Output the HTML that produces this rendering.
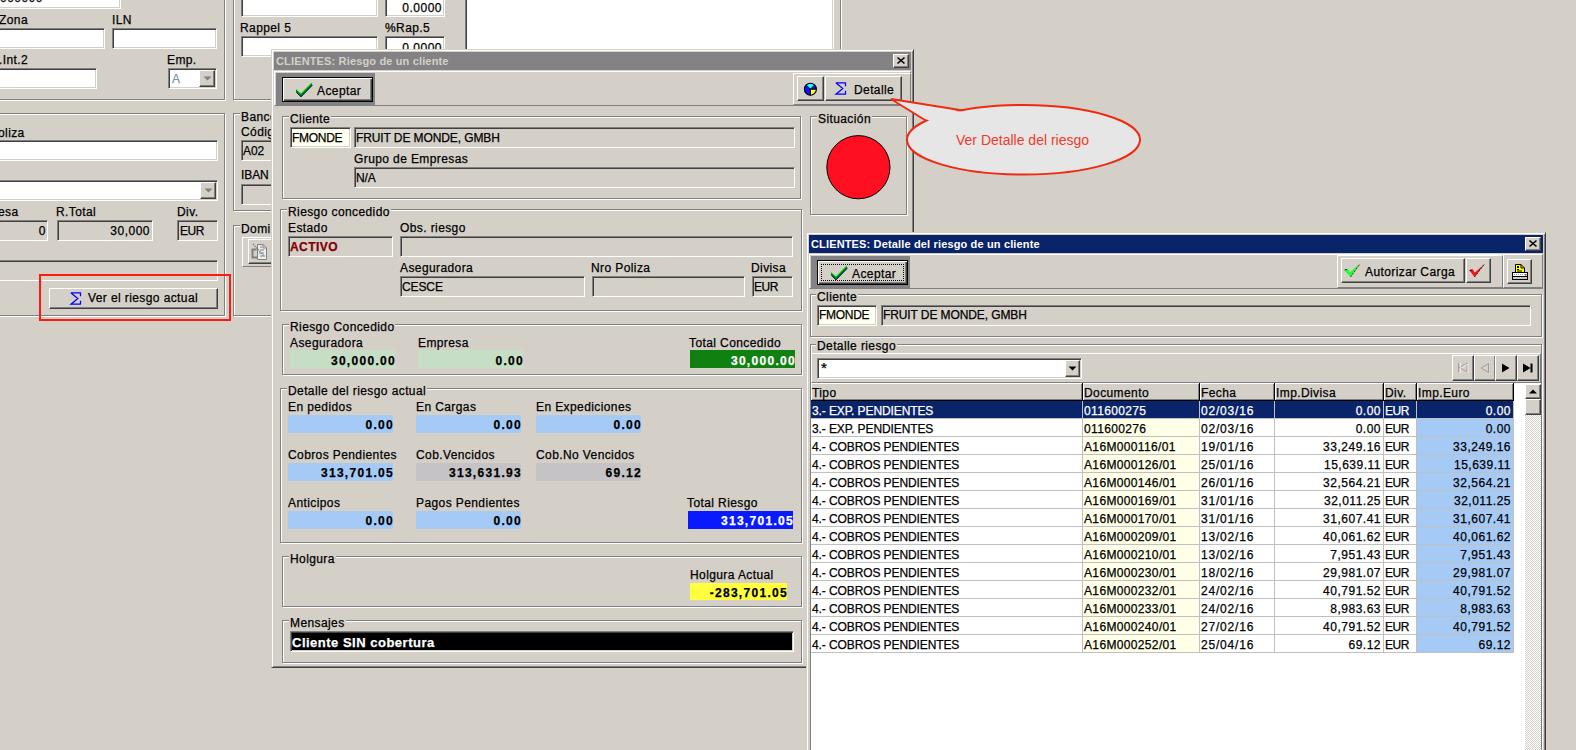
<!DOCTYPE html><html><head><meta charset="utf-8"><style>
*{margin:0;padding:0}
html,body{width:1576px;height:750px;overflow:hidden;background:#d4d0c8;position:relative}
.a,.t,.fld,.grp,.btn,.pnl,.pnls,.win{position:absolute;box-sizing:border-box}
.t{font-family:"Liberation Sans",sans-serif;font-size:12px;line-height:12px;white-space:nowrap;color:#000;letter-spacing:0.4px;-webkit-text-stroke:0.25px}
.b{font-weight:bold;letter-spacing:1.3px}
.up{letter-spacing:-0.1px}
.dt{letter-spacing:0.8px}
.doc{letter-spacing:0.35px}
.eur{letter-spacing:-0.5px}
.num{letter-spacing:0.5px}
.r{text-align:right}
.gl{background:#d4d0c8;padding:0 1px}
.fld{border:1px solid;border-color:#808080 #fff #fff #808080;box-shadow:inset 1px 1px #404040,inset -1px -1px #d4d0c8}
.grp{border:1px solid #808080;box-shadow:inset 1px 1px #fff,1px 1px #fff}
.btn{background:#d4d0c8;border:1px solid;border-color:#fff #404040 #404040 #fff;box-shadow:inset -1px -1px #808080}
.pnl{border:1px solid;border-color:#fff #808080 #808080 #fff}
.win{background:#d4d0c8;border:1px solid;border-color:#d4d0c8 #404040 #404040 #d4d0c8;box-shadow:inset 1px 1px #fff,inset -1px -1px #808080}
.tt{font-family:"Liberation Sans",sans-serif;font-size:11px;line-height:11px;font-weight:bold;letter-spacing:0.15px;white-space:nowrap;position:absolute}
svg{position:absolute;overflow:visible}
</style></head><body>
<div class="grp" style="left:-20px;top:-40px;width:245px;height:140px;"></div>
<div class="fld" style="left:-20px;top:-30px;width:141px;height:39px;background:#fff;"></div>
<div class="t num" style="left:0px;top:-8px;">000090</div>
<div class="t" style="left:-1px;top:14px;">Zona</div>
<div class="fld" style="left:-20px;top:28px;width:125px;height:21px;background:#fff;"></div>
<div class="t" style="left:112px;top:14px;">ILN</div>
<div class="fld" style="left:112px;top:28px;width:105px;height:21px;background:#fff;"></div>
<div class="t" style="left:-1px;top:54px;">.Int.2</div>
<div class="fld" style="left:-20px;top:68px;width:117px;height:21px;background:#fff;"></div>
<div class="t" style="left:167px;top:54px;">Emp.</div>
<div class="fld" style="left:168px;top:68px;width:49px;height:21px;background:#fff;"></div>
<div class="t" style="left:172px;top:73px;color:#8090b0">A</div>
<div class="btn" style="left:199px;top:70px;width:16px;height:17px;"></div>
<svg style="left:203px;top:76px" width="9" height="5"><path d="M0.5 0.5h8l-4 4z" fill="#808080"/></svg>
<div class="grp" style="left:-20px;top:113px;width:245px;height:203px;"></div>
<div class="t" style="left:-2px;top:127px;">oliza</div>
<div class="fld" style="left:-20px;top:140px;width:238px;height:21px;background:#fff;"></div>
<div class="fld" style="left:-20px;top:180px;width:238px;height:21px;background:#fff;"></div>
<div class="btn" style="left:200px;top:182px;width:16px;height:17px;"></div>
<svg style="left:204px;top:188px" width="9" height="5"><path d="M0.5 0.5h8l-4 4z" fill="#808080"/></svg>
<div class="t" style="left:-2px;top:206px;">esa</div>
<div class="fld" style="left:-20px;top:220px;width:68px;height:21px;background:#d4d0c8;"></div>
<div class="t num r" style="right:1530px;top:225px;">0</div>
<div class="t" style="left:56px;top:206px;">R.Total</div>
<div class="fld" style="left:57px;top:220px;width:96px;height:21px;background:#d4d0c8;"></div>
<div class="t num r" style="right:1426px;top:225px;">30,000</div>
<div class="t" style="left:177px;top:206px;">Div.</div>
<div class="fld" style="left:177px;top:220px;width:41px;height:21px;background:#d4d0c8;"></div>
<div class="t eur" style="left:180px;top:225px;">EUR</div>
<div class="fld" style="left:-20px;top:260px;width:238px;height:21px;background:#d4d0c8;"></div>
<div class="btn" style="left:49px;top:288px;width:169px;height:21px;"></div>
<svg style="left:70px;top:292px" width="12" height="14"><path d="M0.8 0.8H10.8M10.5 0.5V4.2M1 1L7.8 6.5L1 12.2H10.8M10.5 12.5V8.8" fill="none" stroke="#0000ff" stroke-width="1.25"/></svg>
<div class="t" style="left:88px;top:292px;">Ver el riesgo actual</div>
<div class="a" style="left:39px;top:274px;width:192px;height:47px;border:2px solid #ff1a10"></div>
<div class="grp" style="left:233px;top:-40px;width:608px;height:140px;"></div>
<div class="fld" style="left:241px;top:-30px;width:137px;height:47px;background:#fff;"></div>
<div class="fld" style="left:385px;top:-30px;width:60px;height:47px;background:#fff;"></div>
<div class="t num r" style="right:1134px;top:2px;">0.0000</div>
<div class="t" style="left:240px;top:22px;">Rappel 5</div>
<div class="t" style="left:385px;top:22px;">%Rap.5</div>
<div class="fld" style="left:241px;top:36px;width:137px;height:21px;background:#fff;"></div>
<div class="fld" style="left:385px;top:36px;width:60px;height:25px;background:#fff;"></div>
<div class="t num r" style="right:1134px;top:42px;">0.0000</div>
<div class="fld" style="left:465px;top:-30px;width:369px;height:91px;background:#fff;"></div>
<div class="grp" style="left:233px;top:113px;width:68px;height:98px;"></div>
<div class="t gl" style="left:240px;top:111px;">Banco</div>
<div class="t" style="left:241px;top:126px;">Códig</div>
<div class="fld" style="left:241px;top:140px;width:60px;height:21px;background:#d4d0c8;"></div>
<div class="t up" style="left:243px;top:145px;">A02</div>
<div class="t up" style="left:241px;top:169px;">IBAN</div>
<div class="fld" style="left:241px;top:184px;width:60px;height:21px;background:#d4d0c8;"></div>
<div class="grp" style="left:233px;top:225px;width:68px;height:91px;"></div>
<div class="t gl" style="left:240px;top:223px;">Domi</div>
<div class="pnl" style="left:242px;top:237px;width:59px;height:30px;"></div>
<div class="btn" style="left:248px;top:239px;width:53px;height:25px;"></div>
<svg style="left:251px;top:243px" width="17" height="18"><path d="M6.5 1.5H12L15.5 5V16.5H6.5Z" fill="#eeeeee" stroke="#808080"/><path d="M12 1.5V5H15.5" fill="none" stroke="#808080"/><path d="M9 4h2M9 7h4M8 10h5M9 13h5" stroke="#808080"/><path d="M5.5 6.5H1.5V14.5H6" fill="none" stroke="#808080" stroke-width="2"/><path d="M2 1l11 12" stroke="#808080" stroke-width="1.3" stroke-dasharray="1.4 1"/></svg>
<div class="win" style="left:271px;top:49px;width:643px;height:619px;"></div>
<div class="a" style="left:274px;top:52px;width:637px;height:18px;background:#858286"></div>
<div class="tt" style="left:276px;top:56px;color:#d4d0c8">CLIENTES: Riesgo de un cliente</div>
<div class="btn" style="left:893px;top:54px;width:16px;height:14px;"></div>
<svg style="left:897px;top:57px" width="8" height="7"><path d="M0.5 0.5L7.5 6.5M7.5 0.5L0.5 6.5" stroke="#000" stroke-width="1.6"/></svg>
<div class="pnl" style="left:274px;top:71px;width:637px;height:35px;"></div>
<div class="a" style="left:276px;top:73px;width:99px;height:32px;background:#858286"></div>
<div class="a" style="left:282px;top:77px;width:91px;height:25px;border:1px solid #000;background:#d4d0c8;box-shadow:inset 1px 1px #fff,inset -1px -1px #404040,inset -2px -2px #808080"></div>
<svg style="left:296px;top:82px" width="18" height="17"><path d="M0 7.2L5 11.6L15.6 0.8L16.4 3.2L5 15L0 10Z" fill="#008a00"/><path d="M0.3 10.2L5 14.8L16.3 3.2" fill="none" stroke="#000080" stroke-width="1"/><path d="M0.3 7.4L5 11.6L15.4 1" fill="none" stroke="#22ff22" stroke-width="0.8"/></svg>
<div class="t" style="left:317px;top:85px;">Aceptar</div>
<div class="pnl" style="left:793px;top:73px;width:118px;height:32px;"></div>
<div class="btn" style="left:797px;top:76px;width:27px;height:25px;"></div>
<svg style="left:804px;top:83px" width="14" height="14"><circle cx="6.4" cy="6.2" r="6.0" fill="#1010ff"/><path d="M6.4 6.2L2.16 1.96A6.0 6.0 0 0 1 10.64 1.96Z" fill="#20ffff"/><path d="M6.4 6.2H12.4A6.0 6.0 0 0 1 6.4 12.2Z" fill="#ffff30"/><path d="M2.16 1.96L6.4 6.2L10.64 1.96M6.4 6.2H12.4M6.4 6.2V12.2" stroke="#000" stroke-width="1" fill="none"/><circle cx="6.4" cy="6.2" r="6.0" fill="none" stroke="#000" stroke-width="1.1"/></svg>
<div class="btn" style="left:825px;top:76px;width:77px;height:25px;"></div>
<svg style="left:835px;top:82px" width="12" height="14"><path d="M0.8 0.8H10.8M10.5 0.5V4.2M1 1L7.8 6.5L1 12.2H10.8M10.5 12.5V8.8" fill="none" stroke="#0000ff" stroke-width="1.25"/></svg>
<div class="t" style="left:854px;top:84px;">Detalle</div>
<div class="grp" style="left:282px;top:116px;width:519px;height:83px;"></div>
<div class="t gl" style="left:289px;top:113px;">Cliente</div>
<div class="fld" style="left:290px;top:127px;width:61px;height:21px;background:#fffff0;"></div>
<div class="t" style="left:292px;top:132px;letter-spacing:-0.3px">FMONDE</div>
<div class="fld" style="left:354px;top:127px;width:441px;height:21px;background:#d4d0c8;"></div>
<div class="t up" style="left:356px;top:132px;">FRUIT DE MONDE, GMBH</div>
<div class="t" style="left:354px;top:153px;">Grupo de Empresas</div>
<div class="fld" style="left:354px;top:167px;width:441px;height:21px;background:#d4d0c8;"></div>
<div class="t up" style="left:356px;top:172px;">N/A</div>
<div class="grp" style="left:810px;top:116px;width:97px;height:99px;"></div>
<div class="t gl" style="left:817px;top:113px;">Situación</div>
<svg style="left:826px;top:135px" width="65" height="65"><circle cx="32.4" cy="32.2" r="31.6" fill="#ff0f1f" stroke="#000" stroke-width="1"/></svg>
<div class="grp" style="left:280px;top:209px;width:522px;height:102px;"></div>
<div class="t gl" style="left:287px;top:206px;">Riesgo concedido</div>
<div class="t" style="left:288px;top:222px;">Estado</div>
<div class="fld" style="left:288px;top:236px;width:105px;height:21px;background:#d4d0c8;"></div>
<div class="t b" style="left:290px;top:241px;color:#800000;letter-spacing:0.45px">ACTIVO</div>
<div class="t" style="left:400px;top:222px;">Obs. riesgo</div>
<div class="fld" style="left:400px;top:236px;width:393px;height:21px;background:#d4d0c8;"></div>
<div class="t" style="left:400px;top:262px;">Aseguradora</div>
<div class="fld" style="left:400px;top:276px;width:185px;height:21px;background:#d4d0c8;"></div>
<div class="t up" style="left:402px;top:281px;">CESCE</div>
<div class="t" style="left:591px;top:262px;">Nro Poliza</div>
<div class="fld" style="left:592px;top:276px;width:153px;height:21px;background:#d4d0c8;"></div>
<div class="t" style="left:751px;top:262px;">Divisa</div>
<div class="fld" style="left:752px;top:276px;width:41px;height:21px;background:#d4d0c8;"></div>
<div class="t eur" style="left:754px;top:281px;">EUR</div>
<div class="grp" style="left:282px;top:324px;width:520px;height:51px;"></div>
<div class="t gl" style="left:289px;top:321px;">Riesgo Concedido</div>
<div class="t" style="left:290px;top:337px;">Aseguradora</div>
<div class="a" style="left:290px;top:350px;width:105px;height:18px;background:#c6dec6"></div>
<div class="t b r" style="right:1180px;top:355px;">30,000.00</div>
<div class="t" style="left:418px;top:337px;">Empresa</div>
<div class="a" style="left:418px;top:350px;width:105px;height:18px;background:#c6dec6"></div>
<div class="t b r" style="right:1052px;top:355px;">0.00</div>
<div class="t" style="left:689px;top:337px;">Total Concedido</div>
<div class="a" style="left:690px;top:350px;width:105px;height:18px;background:#108010"></div>
<div class="t b r" style="right:780px;top:355px;color:#fff">30,000.00</div>
<div class="grp" style="left:280px;top:388px;width:522px;height:155px;"></div>
<div class="t gl" style="left:287px;top:385px;">Detalle del riesgo actual</div>
<div class="t" style="left:288px;top:401px;">En pedidos</div>
<div class="a" style="left:288px;top:415px;width:105px;height:18px;background:#a6caf6"></div>
<div class="t b r" style="right:1182px;top:419px;">0.00</div>
<div class="t" style="left:416px;top:401px;">En Cargas</div>
<div class="a" style="left:416px;top:415px;width:105px;height:18px;background:#a6caf6"></div>
<div class="t b r" style="right:1054px;top:419px;">0.00</div>
<div class="t" style="left:536px;top:401px;">En Expediciones</div>
<div class="a" style="left:536px;top:415px;width:105px;height:18px;background:#a6caf6"></div>
<div class="t b r" style="right:934px;top:419px;">0.00</div>
<div class="t" style="left:288px;top:449px;">Cobros Pendientes</div>
<div class="a" style="left:288px;top:463px;width:105px;height:18px;background:#a6caf6"></div>
<div class="t b r" style="right:1182px;top:467px;">313,701.05</div>
<div class="t" style="left:416px;top:449px;">Cob.Vencidos</div>
<div class="a" style="left:416px;top:463px;width:105px;height:18px;background:#c5c3c6"></div>
<div class="t b r" style="right:1054px;top:467px;">313,631.93</div>
<div class="t" style="left:536px;top:449px;">Cob.No Vencidos</div>
<div class="a" style="left:536px;top:463px;width:105px;height:18px;background:#c5c3c6"></div>
<div class="t b r" style="right:934px;top:467px;">69.12</div>
<div class="t" style="left:288px;top:497px;">Anticipos</div>
<div class="a" style="left:288px;top:511px;width:105px;height:18px;background:#a6caf6"></div>
<div class="t b r" style="right:1182px;top:515px;">0.00</div>
<div class="t" style="left:416px;top:497px;">Pagos Pendientes</div>
<div class="a" style="left:416px;top:511px;width:105px;height:18px;background:#a6caf6"></div>
<div class="t b r" style="right:1054px;top:515px;">0.00</div>
<div class="t" style="left:687px;top:497px;">Total Riesgo</div>
<div class="a" style="left:688px;top:511px;width:105px;height:18px;background:#0a1aff"></div>
<div class="t b r" style="right:782px;top:515px;color:#fff">313,701.05</div>
<div class="grp" style="left:282px;top:556px;width:520px;height:51px;"></div>
<div class="t gl" style="left:289px;top:553px;">Holgura</div>
<div class="t" style="left:690px;top:569px;">Holgura Actual</div>
<div class="a" style="left:690px;top:583px;width:97px;height:17px;background:#ffff40"></div>
<div class="t b r" style="right:788px;top:587px;">-283,701.05</div>
<div class="grp" style="left:282px;top:620px;width:520px;height:43px;"></div>
<div class="t gl" style="left:289px;top:617px;">Mensajes</div>
<div class="fld" style="left:290px;top:631px;width:504px;height:21px;background:#000;"></div>
<div class="t b" style="left:292px;top:636px;color:#fff;letter-spacing:0.5px;font-size:13px;line-height:13px">Cliente SIN cobertura</div>
<svg style="left:0;top:0" width="1576" height="750"><path d="M963 110.5 L891 99 L926.5 121" fill="#e6e6e6" stroke="#f02a10" stroke-width="2" stroke-linejoin="miter"/><ellipse cx="1023.5" cy="139.8" rx="116.5" ry="34.8" fill="#e6e6e6" stroke="#f02a10" stroke-width="2"/><path d="M966 112.5 L897 101.5 L932 122.5 L950 116Z" fill="#e6e6e6"/></svg>
<div class="a" style="left:956px;top:133px;font-family:'Liberation Sans',sans-serif;font-size:14px;line-height:14px;color:#ef3a2a;white-space:nowrap">Ver Detalle del riesgo</div>
<div class="win" style="left:806px;top:232px;width:740px;height:569px;"></div>
<div class="a" style="left:809px;top:235px;width:734px;height:18px;background:#0a246a"></div>
<div class="tt" style="left:811px;top:239px;color:#fff">CLIENTES: Detalle del riesgo de un cliente</div>
<div class="btn" style="left:1525px;top:237px;width:16px;height:14px;"></div>
<svg style="left:1529px;top:240px" width="8" height="7"><path d="M0.5 0.5L7.5 6.5M7.5 0.5L0.5 6.5" stroke="#000" stroke-width="1.6"/></svg>
<div class="pnl" style="left:809px;top:254px;width:734px;height:35px;"></div>
<div class="a" style="left:811px;top:256px;width:99px;height:32px;background:#858286"></div>
<div class="a" style="left:817px;top:260px;width:91px;height:25px;border:1px solid #000;background:#d4d0c8;box-shadow:inset 1px 1px #fff,inset -1px -1px #404040,inset -2px -2px #808080"></div>
<div class="a" style="left:821px;top:264px;width:83px;height:17px;border:1px dotted #000"></div>
<svg style="left:831px;top:265px" width="18" height="17"><path d="M0 7.2L5 11.6L15.6 0.8L16.4 3.2L5 15L0 10Z" fill="#008a00"/><path d="M0.3 10.2L5 14.8L16.3 3.2" fill="none" stroke="#000080" stroke-width="1"/><path d="M0.3 7.4L5 11.6L15.4 1" fill="none" stroke="#22ff22" stroke-width="0.8"/></svg>
<div class="t" style="left:852px;top:268px;">Aceptar</div>
<div class="pnl" style="left:1337px;top:255px;width:166px;height:33px;"></div>
<div class="btn" style="left:1341px;top:258px;width:124px;height:25px;"></div>
<svg style="left:1344px;top:262px" width="17" height="16"><path d="M0.5 8.5L3.5 6.5L6.2 10L16 1.5L6.5 15Z" fill="#20ff30"/><path d="M6.5 15L16 2" stroke="#000" stroke-width="1" stroke-dasharray="1 1"/><path d="M0.5 8L3 7.5" stroke="#000" stroke-width="0.8"/></svg>
<div class="t" style="left:1365px;top:266px;">Autorizar Carga</div>
<div class="btn" style="left:1466px;top:258px;width:25px;height:25px;"></div>
<svg style="left:1469px;top:263px" width="17" height="16"><path d="M0.5 7.5L3.5 6L5.8 9.5L15.5 1L5.5 14Z" fill="#ff1010"/><path d="M5.5 14L15.5 1" stroke="#000" stroke-width="1" stroke-dasharray="1 1"/><path d="M0.5 7.5L3 7" stroke="#000" stroke-width="0.8"/></svg>
<div class="pnl" style="left:1503px;top:254px;width:40px;height:34px;"></div>
<div class="btn" style="left:1507px;top:259px;width:25px;height:25px;"></div>
<svg style="left:1512px;top:263px" width="17" height="18"><path d="M3.5 1.5H9L12.5 5V9.5H3.5Z" fill="#ffff00" stroke="#000"/><path d="M9 1.5V5H12.5" fill="none" stroke="#000"/><rect x="5" y="3" width="2" height="2" fill="#000"/><rect x="5" y="6" width="2" height="1" fill="#000"/><rect x="5" y="7.5" width="5" height="1" fill="#000"/><rect x="0.5" y="9.5" width="15" height="7" fill="#fff" stroke="#000"/><path d="M2 11.5h11" stroke="#a0a0a0" stroke-dasharray="1 1"/><rect x="13" y="11" width="1.5" height="1.5" fill="#ff0000"/><path d="M1 13.5h14" stroke="#000"/><rect x="1" y="14" width="14" height="2" fill="#c8c8c8"/></svg>
<div class="grp" style="left:810px;top:294px;width:732px;height:43px;"></div>
<div class="t gl" style="left:816px;top:291px;">Cliente</div>
<div class="fld" style="left:817px;top:305px;width:60px;height:21px;background:#fffff0;"></div>
<div class="t" style="left:819px;top:309px;letter-spacing:-0.3px">FMONDE</div>
<div class="fld" style="left:881px;top:305px;width:650px;height:21px;background:#d4d0c8;"></div>
<div class="t up" style="left:883px;top:309px;">FRUIT DE MONDE, GMBH</div>
<div class="grp" style="left:810px;top:344px;width:732px;height:557px;"></div>
<div class="t gl" style="left:816px;top:340px;">Detalle riesgo</div>
<div class="pnl" style="left:811px;top:353px;width:730px;height:30px;"></div>
<div class="fld" style="left:817px;top:358px;width:265px;height:21px;background:#fff;"></div>
<div class="t" style="left:821px;top:362px;font-size:15px">*</div>
<div class="btn" style="left:1065px;top:360px;width:15px;height:17px;"></div>
<svg style="left:1068px;top:366px" width="9" height="5"><path d="M0.5 0.5h8l-4 4z" fill="#000"/></svg>
<div class="btn" style="left:1452px;top:355px;width:22px;height:26px;"></div>
<div class="btn" style="left:1474px;top:355px;width:22px;height:26px;"></div>
<div class="btn" style="left:1495px;top:355px;width:22px;height:26px;"></div>
<div class="btn" style="left:1517px;top:355px;width:22px;height:26px;"></div>
<svg style="left:0;top:0" width="1576" height="750"><path d="M1458.5 363v9M1459.5 367.5l7.5-4.5v9z" fill="none" stroke="#a0a0a0"/><path d="M1460.5 363v10M1461 368l7-4v9" fill="none" stroke="#fff" stroke-width="0.6"/><path d="M1488.5 363.5v9l-7.5-4.5z" fill="none" stroke="#a0a0a0"/><path d="M1502 363.5v9l7.5-4.5z" fill="#000"/><path d="M1523 363.5v9l7.5-4.5z" fill="#000"/><rect x="1530.5" y="363.5" width="2" height="9" fill="#000"/></svg>
<div class="a" style="left:811px;top:383px;width:730px;height:418px;background:#fff"></div>
<div class="a" style="left:811px;top:383px;width:272px;height:18px;background:#d4d0c8;border-right:1px solid #000;border-bottom:1px solid #000;box-shadow:inset 1px 1px #fff,inset -1px -1px #808080"></div>
<div class="t" style="left:812px;top:387px;">Tipo</div>
<div class="a" style="left:1083px;top:383px;width:117px;height:18px;background:#d4d0c8;border-right:1px solid #000;border-bottom:1px solid #000;box-shadow:inset 1px 1px #fff,inset -1px -1px #808080"></div>
<div class="t" style="left:1084px;top:387px;">Documento</div>
<div class="a" style="left:1200px;top:383px;width:75px;height:18px;background:#d4d0c8;border-right:1px solid #000;border-bottom:1px solid #000;box-shadow:inset 1px 1px #fff,inset -1px -1px #808080"></div>
<div class="t" style="left:1201px;top:387px;">Fecha</div>
<div class="a" style="left:1275px;top:383px;width:109px;height:18px;background:#d4d0c8;border-right:1px solid #000;border-bottom:1px solid #000;box-shadow:inset 1px 1px #fff,inset -1px -1px #808080"></div>
<div class="t" style="left:1276px;top:387px;">Imp.Divisa</div>
<div class="a" style="left:1384px;top:383px;width:33px;height:18px;background:#d4d0c8;border-right:1px solid #000;border-bottom:1px solid #000;box-shadow:inset 1px 1px #fff,inset -1px -1px #808080"></div>
<div class="t" style="left:1385px;top:387px;">Div.</div>
<div class="a" style="left:1417px;top:383px;width:97px;height:18px;background:#d4d0c8;border-right:1px solid #000;border-bottom:1px solid #000;box-shadow:inset 1px 1px #fff,inset -1px -1px #808080"></div>
<div class="t" style="left:1418px;top:387px;">Imp.Euro</div>
<div class="a" style="left:811px;top:401px;width:272px;height:18px;background:#0a246a;border-right:1px solid #c0c0c0;border-bottom:1px solid #c0c0c0"></div>
<div class="t up" style="left:812px;top:405px;color:#fff">3.- EXP. PENDIENTES</div>
<div class="a" style="left:1083px;top:401px;width:117px;height:18px;background:#0a246a;border-right:1px solid #c0c0c0;border-bottom:1px solid #c0c0c0"></div>
<div class="t doc" style="left:1084px;top:405px;color:#fff">011600275</div>
<div class="a" style="left:1200px;top:401px;width:75px;height:18px;background:#0a246a;border-right:1px solid #c0c0c0;border-bottom:1px solid #c0c0c0"></div>
<div class="t dt" style="left:1201px;top:405px;color:#fff">02/03/16</div>
<div class="a" style="left:1275px;top:401px;width:109px;height:18px;background:#0a246a;border-right:1px solid #c0c0c0;border-bottom:1px solid #c0c0c0"></div>
<div class="t num r" style="right:195px;top:405px;color:#fff">0.00</div>
<div class="a" style="left:1384px;top:401px;width:33px;height:18px;background:#0a246a;border-right:1px solid #c0c0c0;border-bottom:1px solid #c0c0c0"></div>
<div class="t eur" style="left:1385px;top:405px;color:#fff">EUR</div>
<div class="a" style="left:1417px;top:401px;width:97px;height:18px;background:#0a246a;border-right:1px solid #c0c0c0;border-bottom:1px solid #c0c0c0"></div>
<div class="t num r" style="right:65px;top:405px;color:#fff">0.00</div>
<div class="a" style="left:811px;top:419px;width:272px;height:18px;background:#fff;border-right:1px solid #c0c0c0;border-bottom:1px solid #c0c0c0"></div>
<div class="t up" style="left:812px;top:423px;color:#000">3.- EXP. PENDIENTES</div>
<div class="a" style="left:1083px;top:419px;width:117px;height:18px;background:#ffffe8;border-right:1px solid #c0c0c0;border-bottom:1px solid #c0c0c0"></div>
<div class="t doc" style="left:1084px;top:423px;color:#000">011600276</div>
<div class="a" style="left:1200px;top:419px;width:75px;height:18px;background:#fff;border-right:1px solid #c0c0c0;border-bottom:1px solid #c0c0c0"></div>
<div class="t dt" style="left:1201px;top:423px;color:#000">02/03/16</div>
<div class="a" style="left:1275px;top:419px;width:109px;height:18px;background:#fff;border-right:1px solid #c0c0c0;border-bottom:1px solid #c0c0c0"></div>
<div class="t num r" style="right:195px;top:423px;color:#000">0.00</div>
<div class="a" style="left:1384px;top:419px;width:33px;height:18px;background:#fff;border-right:1px solid #c0c0c0;border-bottom:1px solid #c0c0c0"></div>
<div class="t eur" style="left:1385px;top:423px;color:#000">EUR</div>
<div class="a" style="left:1417px;top:419px;width:97px;height:18px;background:#a6caf6;border-right:1px solid #c0c0c0;border-bottom:1px solid #c0c0c0"></div>
<div class="t num r" style="right:65px;top:423px;color:#000">0.00</div>
<div class="a" style="left:811px;top:437px;width:272px;height:18px;background:#fff;border-right:1px solid #c0c0c0;border-bottom:1px solid #c0c0c0"></div>
<div class="t up" style="left:812px;top:441px;color:#000">4.- COBROS PENDIENTES</div>
<div class="a" style="left:1083px;top:437px;width:117px;height:18px;background:#ffffe8;border-right:1px solid #c0c0c0;border-bottom:1px solid #c0c0c0"></div>
<div class="t doc" style="left:1084px;top:441px;color:#000">A16M000116/01</div>
<div class="a" style="left:1200px;top:437px;width:75px;height:18px;background:#fff;border-right:1px solid #c0c0c0;border-bottom:1px solid #c0c0c0"></div>
<div class="t dt" style="left:1201px;top:441px;color:#000">19/01/16</div>
<div class="a" style="left:1275px;top:437px;width:109px;height:18px;background:#fff;border-right:1px solid #c0c0c0;border-bottom:1px solid #c0c0c0"></div>
<div class="t num r" style="right:195px;top:441px;color:#000">33,249.16</div>
<div class="a" style="left:1384px;top:437px;width:33px;height:18px;background:#fff;border-right:1px solid #c0c0c0;border-bottom:1px solid #c0c0c0"></div>
<div class="t eur" style="left:1385px;top:441px;color:#000">EUR</div>
<div class="a" style="left:1417px;top:437px;width:97px;height:18px;background:#a6caf6;border-right:1px solid #c0c0c0;border-bottom:1px solid #c0c0c0"></div>
<div class="t num r" style="right:65px;top:441px;color:#000">33,249.16</div>
<div class="a" style="left:811px;top:455px;width:272px;height:18px;background:#fff;border-right:1px solid #c0c0c0;border-bottom:1px solid #c0c0c0"></div>
<div class="t up" style="left:812px;top:459px;color:#000">4.- COBROS PENDIENTES</div>
<div class="a" style="left:1083px;top:455px;width:117px;height:18px;background:#ffffe8;border-right:1px solid #c0c0c0;border-bottom:1px solid #c0c0c0"></div>
<div class="t doc" style="left:1084px;top:459px;color:#000">A16M000126/01</div>
<div class="a" style="left:1200px;top:455px;width:75px;height:18px;background:#fff;border-right:1px solid #c0c0c0;border-bottom:1px solid #c0c0c0"></div>
<div class="t dt" style="left:1201px;top:459px;color:#000">25/01/16</div>
<div class="a" style="left:1275px;top:455px;width:109px;height:18px;background:#fff;border-right:1px solid #c0c0c0;border-bottom:1px solid #c0c0c0"></div>
<div class="t num r" style="right:195px;top:459px;color:#000">15,639.11</div>
<div class="a" style="left:1384px;top:455px;width:33px;height:18px;background:#fff;border-right:1px solid #c0c0c0;border-bottom:1px solid #c0c0c0"></div>
<div class="t eur" style="left:1385px;top:459px;color:#000">EUR</div>
<div class="a" style="left:1417px;top:455px;width:97px;height:18px;background:#a6caf6;border-right:1px solid #c0c0c0;border-bottom:1px solid #c0c0c0"></div>
<div class="t num r" style="right:65px;top:459px;color:#000">15,639.11</div>
<div class="a" style="left:811px;top:473px;width:272px;height:18px;background:#fff;border-right:1px solid #c0c0c0;border-bottom:1px solid #c0c0c0"></div>
<div class="t up" style="left:812px;top:477px;color:#000">4.- COBROS PENDIENTES</div>
<div class="a" style="left:1083px;top:473px;width:117px;height:18px;background:#ffffe8;border-right:1px solid #c0c0c0;border-bottom:1px solid #c0c0c0"></div>
<div class="t doc" style="left:1084px;top:477px;color:#000">A16M000146/01</div>
<div class="a" style="left:1200px;top:473px;width:75px;height:18px;background:#fff;border-right:1px solid #c0c0c0;border-bottom:1px solid #c0c0c0"></div>
<div class="t dt" style="left:1201px;top:477px;color:#000">26/01/16</div>
<div class="a" style="left:1275px;top:473px;width:109px;height:18px;background:#fff;border-right:1px solid #c0c0c0;border-bottom:1px solid #c0c0c0"></div>
<div class="t num r" style="right:195px;top:477px;color:#000">32,564.21</div>
<div class="a" style="left:1384px;top:473px;width:33px;height:18px;background:#fff;border-right:1px solid #c0c0c0;border-bottom:1px solid #c0c0c0"></div>
<div class="t eur" style="left:1385px;top:477px;color:#000">EUR</div>
<div class="a" style="left:1417px;top:473px;width:97px;height:18px;background:#a6caf6;border-right:1px solid #c0c0c0;border-bottom:1px solid #c0c0c0"></div>
<div class="t num r" style="right:65px;top:477px;color:#000">32,564.21</div>
<div class="a" style="left:811px;top:491px;width:272px;height:18px;background:#fff;border-right:1px solid #c0c0c0;border-bottom:1px solid #c0c0c0"></div>
<div class="t up" style="left:812px;top:495px;color:#000">4.- COBROS PENDIENTES</div>
<div class="a" style="left:1083px;top:491px;width:117px;height:18px;background:#ffffe8;border-right:1px solid #c0c0c0;border-bottom:1px solid #c0c0c0"></div>
<div class="t doc" style="left:1084px;top:495px;color:#000">A16M000169/01</div>
<div class="a" style="left:1200px;top:491px;width:75px;height:18px;background:#fff;border-right:1px solid #c0c0c0;border-bottom:1px solid #c0c0c0"></div>
<div class="t dt" style="left:1201px;top:495px;color:#000">31/01/16</div>
<div class="a" style="left:1275px;top:491px;width:109px;height:18px;background:#fff;border-right:1px solid #c0c0c0;border-bottom:1px solid #c0c0c0"></div>
<div class="t num r" style="right:195px;top:495px;color:#000">32,011.25</div>
<div class="a" style="left:1384px;top:491px;width:33px;height:18px;background:#fff;border-right:1px solid #c0c0c0;border-bottom:1px solid #c0c0c0"></div>
<div class="t eur" style="left:1385px;top:495px;color:#000">EUR</div>
<div class="a" style="left:1417px;top:491px;width:97px;height:18px;background:#a6caf6;border-right:1px solid #c0c0c0;border-bottom:1px solid #c0c0c0"></div>
<div class="t num r" style="right:65px;top:495px;color:#000">32,011.25</div>
<div class="a" style="left:811px;top:509px;width:272px;height:18px;background:#fff;border-right:1px solid #c0c0c0;border-bottom:1px solid #c0c0c0"></div>
<div class="t up" style="left:812px;top:513px;color:#000">4.- COBROS PENDIENTES</div>
<div class="a" style="left:1083px;top:509px;width:117px;height:18px;background:#ffffe8;border-right:1px solid #c0c0c0;border-bottom:1px solid #c0c0c0"></div>
<div class="t doc" style="left:1084px;top:513px;color:#000">A16M000170/01</div>
<div class="a" style="left:1200px;top:509px;width:75px;height:18px;background:#fff;border-right:1px solid #c0c0c0;border-bottom:1px solid #c0c0c0"></div>
<div class="t dt" style="left:1201px;top:513px;color:#000">31/01/16</div>
<div class="a" style="left:1275px;top:509px;width:109px;height:18px;background:#fff;border-right:1px solid #c0c0c0;border-bottom:1px solid #c0c0c0"></div>
<div class="t num r" style="right:195px;top:513px;color:#000">31,607.41</div>
<div class="a" style="left:1384px;top:509px;width:33px;height:18px;background:#fff;border-right:1px solid #c0c0c0;border-bottom:1px solid #c0c0c0"></div>
<div class="t eur" style="left:1385px;top:513px;color:#000">EUR</div>
<div class="a" style="left:1417px;top:509px;width:97px;height:18px;background:#a6caf6;border-right:1px solid #c0c0c0;border-bottom:1px solid #c0c0c0"></div>
<div class="t num r" style="right:65px;top:513px;color:#000">31,607.41</div>
<div class="a" style="left:811px;top:527px;width:272px;height:18px;background:#fff;border-right:1px solid #c0c0c0;border-bottom:1px solid #c0c0c0"></div>
<div class="t up" style="left:812px;top:531px;color:#000">4.- COBROS PENDIENTES</div>
<div class="a" style="left:1083px;top:527px;width:117px;height:18px;background:#ffffe8;border-right:1px solid #c0c0c0;border-bottom:1px solid #c0c0c0"></div>
<div class="t doc" style="left:1084px;top:531px;color:#000">A16M000209/01</div>
<div class="a" style="left:1200px;top:527px;width:75px;height:18px;background:#fff;border-right:1px solid #c0c0c0;border-bottom:1px solid #c0c0c0"></div>
<div class="t dt" style="left:1201px;top:531px;color:#000">13/02/16</div>
<div class="a" style="left:1275px;top:527px;width:109px;height:18px;background:#fff;border-right:1px solid #c0c0c0;border-bottom:1px solid #c0c0c0"></div>
<div class="t num r" style="right:195px;top:531px;color:#000">40,061.62</div>
<div class="a" style="left:1384px;top:527px;width:33px;height:18px;background:#fff;border-right:1px solid #c0c0c0;border-bottom:1px solid #c0c0c0"></div>
<div class="t eur" style="left:1385px;top:531px;color:#000">EUR</div>
<div class="a" style="left:1417px;top:527px;width:97px;height:18px;background:#a6caf6;border-right:1px solid #c0c0c0;border-bottom:1px solid #c0c0c0"></div>
<div class="t num r" style="right:65px;top:531px;color:#000">40,061.62</div>
<div class="a" style="left:811px;top:545px;width:272px;height:18px;background:#fff;border-right:1px solid #c0c0c0;border-bottom:1px solid #c0c0c0"></div>
<div class="t up" style="left:812px;top:549px;color:#000">4.- COBROS PENDIENTES</div>
<div class="a" style="left:1083px;top:545px;width:117px;height:18px;background:#ffffe8;border-right:1px solid #c0c0c0;border-bottom:1px solid #c0c0c0"></div>
<div class="t doc" style="left:1084px;top:549px;color:#000">A16M000210/01</div>
<div class="a" style="left:1200px;top:545px;width:75px;height:18px;background:#fff;border-right:1px solid #c0c0c0;border-bottom:1px solid #c0c0c0"></div>
<div class="t dt" style="left:1201px;top:549px;color:#000">13/02/16</div>
<div class="a" style="left:1275px;top:545px;width:109px;height:18px;background:#fff;border-right:1px solid #c0c0c0;border-bottom:1px solid #c0c0c0"></div>
<div class="t num r" style="right:195px;top:549px;color:#000">7,951.43</div>
<div class="a" style="left:1384px;top:545px;width:33px;height:18px;background:#fff;border-right:1px solid #c0c0c0;border-bottom:1px solid #c0c0c0"></div>
<div class="t eur" style="left:1385px;top:549px;color:#000">EUR</div>
<div class="a" style="left:1417px;top:545px;width:97px;height:18px;background:#a6caf6;border-right:1px solid #c0c0c0;border-bottom:1px solid #c0c0c0"></div>
<div class="t num r" style="right:65px;top:549px;color:#000">7,951.43</div>
<div class="a" style="left:811px;top:563px;width:272px;height:18px;background:#fff;border-right:1px solid #c0c0c0;border-bottom:1px solid #c0c0c0"></div>
<div class="t up" style="left:812px;top:567px;color:#000">4.- COBROS PENDIENTES</div>
<div class="a" style="left:1083px;top:563px;width:117px;height:18px;background:#ffffe8;border-right:1px solid #c0c0c0;border-bottom:1px solid #c0c0c0"></div>
<div class="t doc" style="left:1084px;top:567px;color:#000">A16M000230/01</div>
<div class="a" style="left:1200px;top:563px;width:75px;height:18px;background:#fff;border-right:1px solid #c0c0c0;border-bottom:1px solid #c0c0c0"></div>
<div class="t dt" style="left:1201px;top:567px;color:#000">18/02/16</div>
<div class="a" style="left:1275px;top:563px;width:109px;height:18px;background:#fff;border-right:1px solid #c0c0c0;border-bottom:1px solid #c0c0c0"></div>
<div class="t num r" style="right:195px;top:567px;color:#000">29,981.07</div>
<div class="a" style="left:1384px;top:563px;width:33px;height:18px;background:#fff;border-right:1px solid #c0c0c0;border-bottom:1px solid #c0c0c0"></div>
<div class="t eur" style="left:1385px;top:567px;color:#000">EUR</div>
<div class="a" style="left:1417px;top:563px;width:97px;height:18px;background:#a6caf6;border-right:1px solid #c0c0c0;border-bottom:1px solid #c0c0c0"></div>
<div class="t num r" style="right:65px;top:567px;color:#000">29,981.07</div>
<div class="a" style="left:811px;top:581px;width:272px;height:18px;background:#fff;border-right:1px solid #c0c0c0;border-bottom:1px solid #c0c0c0"></div>
<div class="t up" style="left:812px;top:585px;color:#000">4.- COBROS PENDIENTES</div>
<div class="a" style="left:1083px;top:581px;width:117px;height:18px;background:#ffffe8;border-right:1px solid #c0c0c0;border-bottom:1px solid #c0c0c0"></div>
<div class="t doc" style="left:1084px;top:585px;color:#000">A16M000232/01</div>
<div class="a" style="left:1200px;top:581px;width:75px;height:18px;background:#fff;border-right:1px solid #c0c0c0;border-bottom:1px solid #c0c0c0"></div>
<div class="t dt" style="left:1201px;top:585px;color:#000">24/02/16</div>
<div class="a" style="left:1275px;top:581px;width:109px;height:18px;background:#fff;border-right:1px solid #c0c0c0;border-bottom:1px solid #c0c0c0"></div>
<div class="t num r" style="right:195px;top:585px;color:#000">40,791.52</div>
<div class="a" style="left:1384px;top:581px;width:33px;height:18px;background:#fff;border-right:1px solid #c0c0c0;border-bottom:1px solid #c0c0c0"></div>
<div class="t eur" style="left:1385px;top:585px;color:#000">EUR</div>
<div class="a" style="left:1417px;top:581px;width:97px;height:18px;background:#a6caf6;border-right:1px solid #c0c0c0;border-bottom:1px solid #c0c0c0"></div>
<div class="t num r" style="right:65px;top:585px;color:#000">40,791.52</div>
<div class="a" style="left:811px;top:599px;width:272px;height:18px;background:#fff;border-right:1px solid #c0c0c0;border-bottom:1px solid #c0c0c0"></div>
<div class="t up" style="left:812px;top:603px;color:#000">4.- COBROS PENDIENTES</div>
<div class="a" style="left:1083px;top:599px;width:117px;height:18px;background:#ffffe8;border-right:1px solid #c0c0c0;border-bottom:1px solid #c0c0c0"></div>
<div class="t doc" style="left:1084px;top:603px;color:#000">A16M000233/01</div>
<div class="a" style="left:1200px;top:599px;width:75px;height:18px;background:#fff;border-right:1px solid #c0c0c0;border-bottom:1px solid #c0c0c0"></div>
<div class="t dt" style="left:1201px;top:603px;color:#000">24/02/16</div>
<div class="a" style="left:1275px;top:599px;width:109px;height:18px;background:#fff;border-right:1px solid #c0c0c0;border-bottom:1px solid #c0c0c0"></div>
<div class="t num r" style="right:195px;top:603px;color:#000">8,983.63</div>
<div class="a" style="left:1384px;top:599px;width:33px;height:18px;background:#fff;border-right:1px solid #c0c0c0;border-bottom:1px solid #c0c0c0"></div>
<div class="t eur" style="left:1385px;top:603px;color:#000">EUR</div>
<div class="a" style="left:1417px;top:599px;width:97px;height:18px;background:#a6caf6;border-right:1px solid #c0c0c0;border-bottom:1px solid #c0c0c0"></div>
<div class="t num r" style="right:65px;top:603px;color:#000">8,983.63</div>
<div class="a" style="left:811px;top:617px;width:272px;height:18px;background:#fff;border-right:1px solid #c0c0c0;border-bottom:1px solid #c0c0c0"></div>
<div class="t up" style="left:812px;top:621px;color:#000">4.- COBROS PENDIENTES</div>
<div class="a" style="left:1083px;top:617px;width:117px;height:18px;background:#ffffe8;border-right:1px solid #c0c0c0;border-bottom:1px solid #c0c0c0"></div>
<div class="t doc" style="left:1084px;top:621px;color:#000">A16M000240/01</div>
<div class="a" style="left:1200px;top:617px;width:75px;height:18px;background:#fff;border-right:1px solid #c0c0c0;border-bottom:1px solid #c0c0c0"></div>
<div class="t dt" style="left:1201px;top:621px;color:#000">27/02/16</div>
<div class="a" style="left:1275px;top:617px;width:109px;height:18px;background:#fff;border-right:1px solid #c0c0c0;border-bottom:1px solid #c0c0c0"></div>
<div class="t num r" style="right:195px;top:621px;color:#000">40,791.52</div>
<div class="a" style="left:1384px;top:617px;width:33px;height:18px;background:#fff;border-right:1px solid #c0c0c0;border-bottom:1px solid #c0c0c0"></div>
<div class="t eur" style="left:1385px;top:621px;color:#000">EUR</div>
<div class="a" style="left:1417px;top:617px;width:97px;height:18px;background:#a6caf6;border-right:1px solid #c0c0c0;border-bottom:1px solid #c0c0c0"></div>
<div class="t num r" style="right:65px;top:621px;color:#000">40,791.52</div>
<div class="a" style="left:811px;top:635px;width:272px;height:18px;background:#fff;border-right:1px solid #c0c0c0;border-bottom:1px solid #c0c0c0"></div>
<div class="t up" style="left:812px;top:639px;color:#000">4.- COBROS PENDIENTES</div>
<div class="a" style="left:1083px;top:635px;width:117px;height:18px;background:#ffffe8;border-right:1px solid #c0c0c0;border-bottom:1px solid #c0c0c0"></div>
<div class="t doc" style="left:1084px;top:639px;color:#000">A16M000252/01</div>
<div class="a" style="left:1200px;top:635px;width:75px;height:18px;background:#fff;border-right:1px solid #c0c0c0;border-bottom:1px solid #c0c0c0"></div>
<div class="t dt" style="left:1201px;top:639px;color:#000">25/04/16</div>
<div class="a" style="left:1275px;top:635px;width:109px;height:18px;background:#fff;border-right:1px solid #c0c0c0;border-bottom:1px solid #c0c0c0"></div>
<div class="t num r" style="right:195px;top:639px;color:#000">69.12</div>
<div class="a" style="left:1384px;top:635px;width:33px;height:18px;background:#fff;border-right:1px solid #c0c0c0;border-bottom:1px solid #c0c0c0"></div>
<div class="t eur" style="left:1385px;top:639px;color:#000">EUR</div>
<div class="a" style="left:1417px;top:635px;width:97px;height:18px;background:#a6caf6;border-right:1px solid #c0c0c0;border-bottom:1px solid #c0c0c0"></div>
<div class="t num r" style="right:65px;top:639px;color:#000">69.12</div>
<div class="a" style="left:1525px;top:399px;width:16px;height:402px;background:repeating-conic-gradient(#fff 0 25%,#d4d0c8 0 50%) 0 0/2px 2px"></div>
<div class="btn" style="left:1525px;top:384px;width:16px;height:15px;"></div>
<svg style="left:1529px;top:389px" width="8" height="5"><path d="M0 4.5h8L4 0.5z" fill="#000"/></svg>
<div class="btn" style="left:1525px;top:399px;width:16px;height:16px;"></div>
</body></html>
